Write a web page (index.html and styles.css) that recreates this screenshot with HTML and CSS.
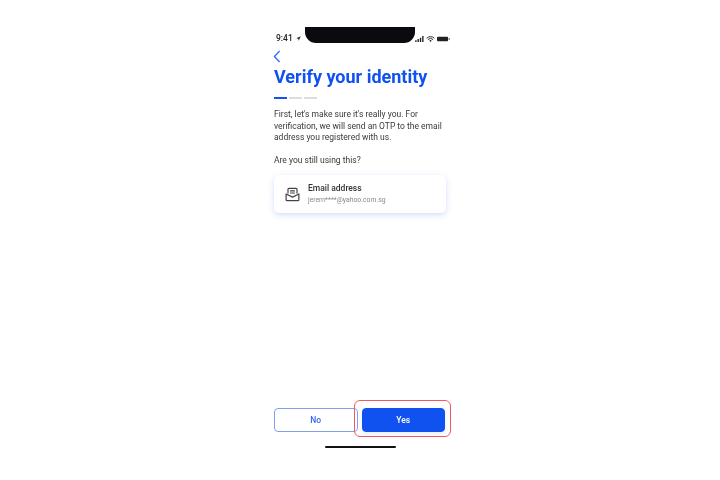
FILE: index.html
```html
<!DOCTYPE html>
<html lang="en">

<head>
    <meta charset="UTF-8">
    <meta name="viewport" content="width=device-width, initial-scale=1.0">
    <title>Verify your identity</title>
    <link rel="stylesheet" href="styles.css">
</head>

<body>
    <div class="phone">
        <div class="status-bar">
            <div class="status-time">9:41
                <svg class="status-arrow" viewBox="0 0 6 6" width="5" height="5"><path d="M5.6.4 3.3 5.6 2.8 3.2.4 2.7z" fill="#222"/></svg>
            </div>
            <div class="notch"></div>
            <div class="status-icons">
                <svg viewBox="0 0 10 7" width="9" height="6"><path d="M0 5h1.6v2H0zM2.7 3.6h1.6V7H2.7zM5.4 2h1.6v5H5.4zM8.1 0h1.6v7H8.1z" fill="#222"/></svg>
                <svg viewBox="0 0 10 7" width="9" height="6"><path d="M.5 2.6a6.4 6.4 0 0 1 9 0M2 4.2a4.2 4.2 0 0 1 6 0" fill="none" stroke="#222" stroke-width="1.1"/><path d="M3.6 5.4a2 2 0 0 1 2.8 0L5 6.9z" fill="#222"/></svg>
                <svg viewBox="0 0 14 6" width="13" height="6"><rect x="0" y=".5" width="12" height="5" rx="1.2" fill="#222"/><rect x="12.6" y="2" width="1.2" height="2" fill="#777"/></svg>
            </div>
        </div>

        <div class="content">
            <svg class="back" viewBox="0 0 8 13" width="8" height="13"><path d="M6.6 1 1.4 6.5l5.2 5.5" fill="none" stroke="#2f6bf0" stroke-width="1.3"/></svg>
            <h1>Verify your identity</h1>
            <div class="steps">
                <span class="step active"></span>
                <span class="step"></span>
                <span class="step"></span>
            </div>
            <p class="intro">First, let's make sure it's really you. For verification, we will send an OTP to the email address you registered with us.</p>
            <p class="question">Are you still using this?</p>
            <div class="card">
                <svg class="card-icon" viewBox="0 0 16 16" width="15" height="15">
                    <path d="M3.2 7V2.4q0-1 1-1h7.6q1 0 1 1V7M5.4 4.2h5.2M5.4 6.4h5.2" fill="none" stroke="#444" stroke-width="1.3"/>
                    <path d="M1.2 7.4 8 10.8l6.8-3.4v6.2q0 1-1 1H2.2q-1 0-1-1z" fill="none" stroke="#444" stroke-width="1.3" stroke-linejoin="round"/>
                </svg>
                <div>
                    <div class="card-title">Email address</div>
                    <div class="card-email">jerem****@yahoo.com.sg</div>
                </div>
            </div>
        </div>

        <div class="actions">
            <button class="btn btn-no">No</button>
            <button class="btn btn-yes">Yes</button>
            <div class="highlight"></div>
        </div>
        <div class="home-bar"></div>
    </div>
</body>

</html>
```

FILE: styles.css
```css
body {
    font-family: 'Roboto', sans-serif;
    margin: 0;
    padding: 0;
    background: white;
    color: #333;
}

.phone {
    width: 192px;
    height: 480px;
    margin: 0 auto;
    padding-top: 27px;
    box-sizing: border-box;
    display: flex;
    flex-direction: column;
    filter: blur(0.35px);
}

.status-bar {
    height: 16px;
    display: flex;
    justify-content: space-between;
    padding: 0 6px 0 12px;
    color: #222;
}

.status-time {
    width: 29px;
    padding-top: 6px;
    font-size: 8.5px;
    line-height: 10px;
    font-weight: 500;
    white-space: nowrap;
}

.status-arrow {
    margin-left: 1px;
}

.notch {
    flex-shrink: 0;
    width: 110px;
    height: 16px;
    background-color: #0b0b0f;
    border-radius: 0 0 11px 11px;
}

.status-icons {
    display: flex;
    align-items: center;
    gap: 2px;
    padding-top: 8px;
    height: 8px;
}

.content {
    flex-grow: 1;
    padding: 0 10px;
}

.back {
    display: block;
    margin: 7px 0 0 -1px;
}

h1 {
    margin: 2px 0 0;
    font-size: 18px;
    line-height: 24px;
    font-weight: 700;
    color: #0f52f0;
    white-space: nowrap;
}

.steps {
    display: flex;
    gap: 2px;
    margin-top: 8px;
}

.step {
    width: 13px;
    height: 2px;
    background-color: #ddd;
}

.step.active {
    background-color: #0f52f0;
}

.intro {
    margin: 10px 0 0;
    font-size: 8.5px;
    line-height: 11.7px;
    color: #3a3a3a;
}

.question {
    margin: 10px 0 0;
    font-size: 8.5px;
    line-height: 12px;
    color: #3a3a3a;
}

.card {
    display: flex;
    align-items: center;
    gap: 8px;
    height: 38px;
    margin-top: 9px;
    padding: 0 11px;
    background-color: white;
    border-radius: 5px;
    box-shadow: 0 2px 6px rgba(80, 130, 230, 0.25);
}

.card-title {
    font-size: 8.5px;
    line-height: 12px;
    font-weight: 500;
    color: #333;
}

.card-email {
    font-size: 6.8px;
    line-height: 12px;
    color: #888;
}

.actions {
    position: relative;
    display: flex;
    gap: 4px;
    padding: 0 11px 0 10px;
}

.btn {
    flex: 1;
    height: 24px;
    padding: 0;
    border-radius: 4px;
    font-family: inherit;
    font-size: 8.5px;
    font-weight: 500;
}

.btn-no {
    background-color: white;
    border: 1px solid #7ea2f0;
    color: #2f6bf0;
}

.btn-yes {
    background-color: #0f52f0;
    border: 1px solid #0f52f0;
    color: white;
    box-shadow: 0 2px 5px rgba(80, 130, 230, 0.15);
}

.highlight {
    position: absolute;
    left: 90px;
    top: -8px;
    width: 95px;
    height: 35px;
    border: 1.5px solid #f05a5a;
    border-radius: 6px;
}

.home-bar {
    width: 71px;
    height: 2.5px;
    margin: 14px auto 32px;
    background-color: #111;
    border-radius: 1px;
}
```
